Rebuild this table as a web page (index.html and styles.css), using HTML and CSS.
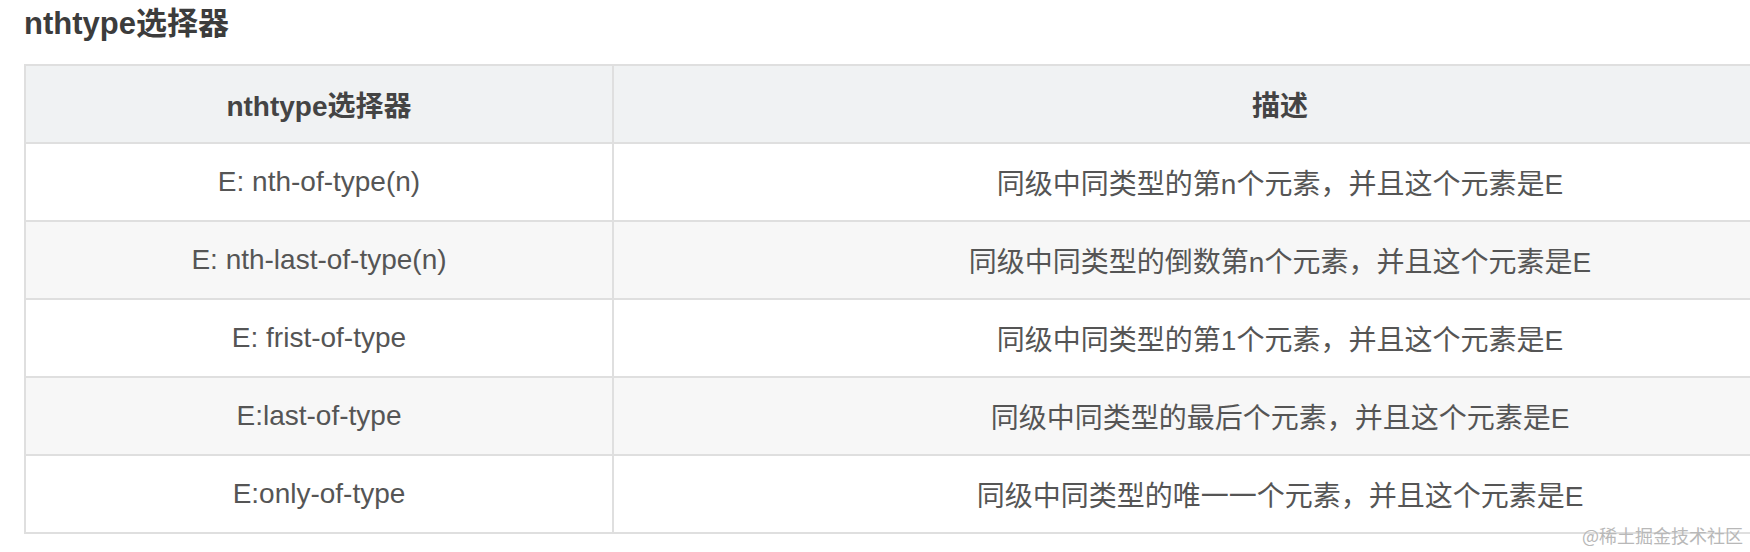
FILE: index.html
```html
<!DOCTYPE html>
<html lang="zh">
<head>
<meta charset="utf-8">
<title>nthtype选择器</title>
<link rel="stylesheet" href="styles.css">
</head>
<body>
<div class="page">
  <h2 class="title">nthtype选择器</h2>
  <table class="sel-table">
    <colgroup>
      <col class="c1">
      <col class="c2">
    </colgroup>
    <thead>
      <tr><th>nthtype选择器</th><th>描述</th></tr>
    </thead>
    <tbody>
      <tr><td>E: nth-of-type(n)</td><td>同级中同类型的第n个元素，并且这个元素是E</td></tr>
      <tr class="alt"><td>E: nth-last-of-type(n)</td><td>同级中同类型的倒数第n个元素，并且这个元素是E</td></tr>
      <tr><td>E: frist-of-type</td><td>同级中同类型的第1个元素，并且这个元素是E</td></tr>
      <tr class="alt"><td>E:last-of-type</td><td>同级中同类型的最后个元素，并且这个元素是E</td></tr>
      <tr><td>E:only-of-type</td><td>同级中同类型的唯一一个元素，并且这个元素是E</td></tr>
    </tbody>
  </table>
</div>
<div class="watermark">@稀土掘金技术社区</div>
</body>
</html>
```
FILE: styles.css
```css
html, body {
  margin: 0;
  padding: 0;
  overflow: hidden;
  background: #ffffff;
}
body {
  width: 1750px;
  height: 552px;
  position: relative;
  font-family: "Liberation Sans", "Noto Sans CJK SC", sans-serif;
}
.page {
  padding-left: 24px;
}
.title {
  margin: 0;
  font-size: 31px;
  line-height: 48px;
  font-weight: bold;
  color: #3c3c3c;
}
.sel-table {
  margin-top: 16px;
  border-collapse: collapse;
  table-layout: fixed;
  width: 1922px;
  font-size: 28px;
  color: #555555;
}
.c1 { width: 588px; }
.c2 { width: 1334px; }
.sel-table th,
.sel-table td {
  border: 2px solid #dfdfdf;
  text-align: center;
  vertical-align: middle;
  padding: 0 10px;
  height: 76px;
}
.sel-table th {
  background: #f0f2f3;
  font-weight: bold;
  color: #444444;
}
.sel-table tr.alt td {
  background: #f7f7f7;
}
.watermark {
  position: absolute;
  right: 7px;
  bottom: 6px;
  font-size: 18px;
  line-height: 22px;
  color: #b8b8b8;
  font-family: "Noto Sans CJK SC", sans-serif;
}
```
